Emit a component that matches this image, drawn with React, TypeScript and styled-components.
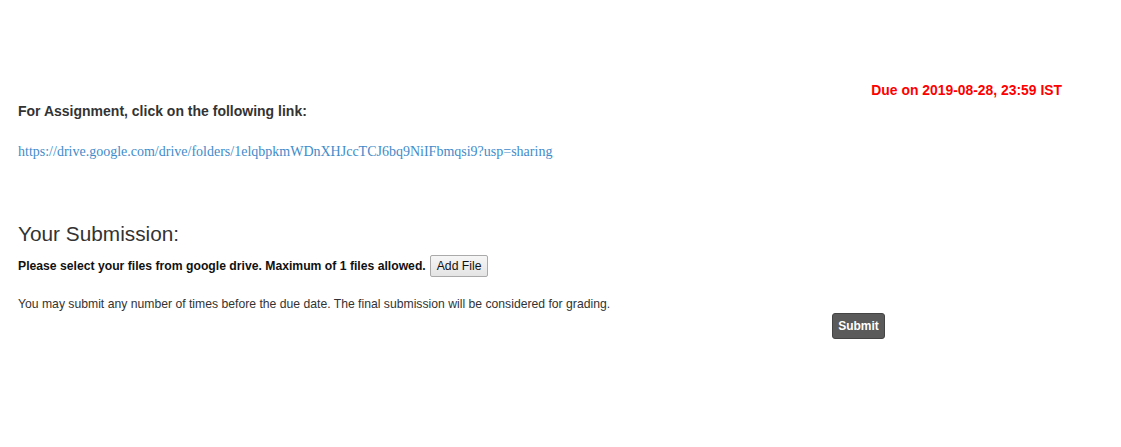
import { FC } from 'react';
import styled, { createGlobalStyle } from 'styled-components';

// ----------------------------------------------------------------------------

const GlobalStyle = createGlobalStyle`
  html, body {
    margin: 0;
    padding: 0;
    background: #fff;
  }

  body {
    font-family: 'Liberation Sans', Arial, sans-serif;
    color: #333;
  }
`;

const Page = styled.div`
  width: 1121px;
  padding: 82px 0 0 18px;
  box-sizing: border-box;
`;

const DueRow = styled.div`
  display: flex;
  justify-content: flex-end;
  padding-right: 59px;
  height: 16px;
`;

const Due = styled.span`
  color: #ff0000;
  font-weight: 700;
  font-size: 13.9px;
  line-height: 16px;
`;

const Heading = styled.p`
  margin: 5px 0 0;
  font-size: 14px;
  line-height: 16px;
  font-weight: 700;
`;

const DriveLink = styled.a`
  display: block;
  margin-top: 25px;
  font-family: 'Liberation Serif', 'Times New Roman', serif;
  font-size: 14px;
  line-height: 16px;
  color: #428bca;
  text-decoration: none;
`;

const SectionTitle = styled.h2`
  margin: 63px 0 0;
  font-size: 20.8px;
  line-height: 22px;
  font-weight: 400;
`;

const SelectRow = styled.div`
  display: flex;
  align-items: center;
  gap: 4px;
  margin-top: 10px;
`;

const SelectText = styled.span`
  font-size: 12.2px;
  font-weight: 700;
  color: #111;
`;

const AddButton = styled.button`
  height: 22px;
  padding: 0 6px;
  font-family: 'Liberation Sans', Arial, sans-serif;
  font-size: 12.2px;
  color: #111;
  background: linear-gradient(#f6f6f6, #e4e4e4);
  border: 1px solid #aaa;
  border-radius: 2px;
`;

const Note = styled.p`
  margin: 20px 0 0;
  font-size: 12.2px;
  line-height: 14px;
`;

const SubmitRow = styled.div`
  display: flex;
  justify-content: flex-end;
  width: 867px;
  margin-top: 2px;
`;

const SubmitButton = styled.button`
  width: 53px;
  height: 26px;
  padding: 0;
  font-family: 'Liberation Sans', Arial, sans-serif;
  font-size: 12px;
  font-weight: 700;
  color: #fff;
  background: #5a5a5a;
  border: 1px solid #444;
  border-radius: 3px;
`;

// ----------------------------------------------------------------------------

const App: FC = () => {
  return (
    <>
      <GlobalStyle />
      <Page>
        <DueRow>
          <Due>Due on 2019-08-28, 23:59 IST</Due>
        </DueRow>
        <Heading>For Assignment, click on the following link:</Heading>
        <DriveLink href="#">
          https://drive.google.com/drive/folders/1elqbpkmWDnXHJccTCJ6bq9NiIFbmqsi9?usp=sharing
        </DriveLink>
        <SectionTitle>Your Submission:</SectionTitle>
        <SelectRow>
          <SelectText>
            Please select your files from google drive. Maximum of 1 files allowed.
          </SelectText>
          <AddButton>Add File</AddButton>
        </SelectRow>
        <Note>
          You may submit any number of times before the due date. The final submission will be
          considered for grading.
        </Note>
        <SubmitRow>
          <SubmitButton>Submit</SubmitButton>
        </SubmitRow>
      </Page>
    </>
  );
};

export default App;
